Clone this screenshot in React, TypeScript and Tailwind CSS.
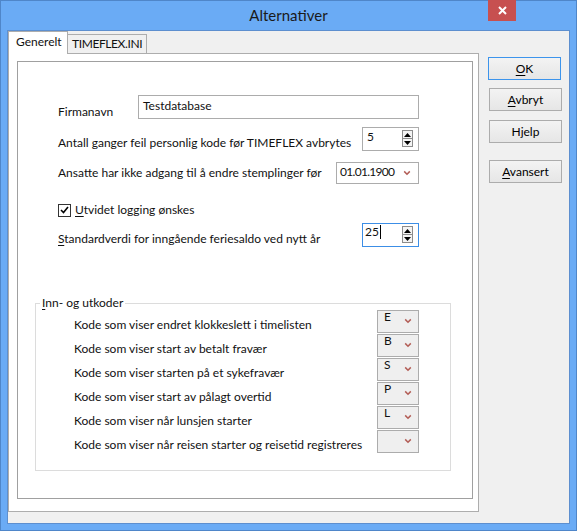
import React from "react";

const FONT = "font-['Lato',sans-serif]";

function Chevron() {
  return (
    <svg width="8" height="6" viewBox="0 0 8 6" className="shrink-0">
      <path d="M1.2 1.4 L4 4.2 L6.8 1.4" fill="none" stroke="#b35e57" strokeWidth="1.5" />
    </svg>
  );
}

function SpinArrows() {
  return (
    <div className="flex flex-col">
      <div className="flex h-[9px] w-[11px] items-center justify-center border border-[#8c8c8c] bg-[#f4f4f4]">
        <svg width="7" height="4" viewBox="0 0 7 4">
          <path d="M0 4 L3.5 0 L7 4Z" fill="#000" />
        </svg>
      </div>
      <div className="-mt-px flex h-[9px] w-[11px] items-center justify-center border border-[#8c8c8c] bg-[#f4f4f4]">
        <svg width="7" height="4" viewBox="0 0 7 4">
          <path d="M0 0 L3.5 4 L7 0Z" fill="#000" />
        </svg>
      </div>
    </div>
  );
}

function Button({ children, focused }: { children: React.ReactNode; focused?: boolean }) {
  return (
    <div
      className={
        "flex h-[23px] w-[73px] items-center justify-center border bg-gradient-to-b from-[#f3f3f3] to-[#e6e6e6] text-[12px] text-black " +
        (focused ? "border-[#3c94ec]" : "border-[#acacac]")
      }
    >
      {children}
    </div>
  );
}

const CODES = [
  { label: "Kode som viser endret klokkeslett i timelisten", value: "E" },
  { label: "Kode som viser start av betalt fravær", value: "B" },
  { label: "Kode som viser starten på et sykefravær", value: "S" },
  { label: "Kode som viser start av pålagt overtid", value: "P" },
  { label: "Kode som viser når lunsjen starter", value: "L" },
  { label: "Kode som viser når reisen starter og reisetid registreres", value: "" },
];

export default function App() {
  return (
    <div
      className={`flex h-[531px] w-[577px] flex-col whitespace-nowrap bg-[#6aabf5] shadow-[inset_0_0_0_1px_#4f86c9] text-[12px] leading-[16px] text-[#111] ${FONT}`}
    >
      {/* title bar */}
      <div className="relative flex h-[30px] shrink-0 items-center justify-center pb-[1px]">
        <span className="text-[15px] leading-[20px] text-[#1a1a1a]">Alternativer</span>
        <div className="absolute right-[61px] top-0 flex h-[21px] w-[28px] items-center justify-center bg-[#c75050]">
          <svg width="9" height="9" viewBox="0 0 9 9">
            <path d="M1 1 L8 8 M8 1 L1 8" stroke="#fff" strokeWidth="2" />
          </svg>
        </div>
      </div>

      {/* client area */}
      <div className="mx-[7px] mb-[7px] flex flex-1 border border-[#5d8fcf] bg-[#f0f0f0]">
        {/* tabs column */}
        <div className="flex w-[471px] flex-col pb-[11px]">
          <div className="flex h-[22px] items-end">
            <div className="relative z-10 -mb-px flex h-[23px] w-[60px] items-start border border-b-0 border-[#adadad] bg-white pl-[7px] pt-[2px]">
              Generelt
            </div>
            <div className="flex h-[19px] w-[79px] items-start border border-l-0 border-b-0 border-[#adadad] bg-[#f0f0f0] pl-[4px] pt-[1px] tracking-[-0.4px]">
              TIMEFLEX.INI
            </div>
          </div>
          <div className="flex flex-1 flex-col border border-[#adadad] bg-white pb-[12px] pl-[8px] pr-[5px] pt-[7px]">
            <div className="flex flex-1 flex-col border border-[#a0a0a0] bg-white">
              {/* Firmanavn */}
              <div className="mt-[33px] flex h-[24px] items-start pl-[40px] pr-[53px]">
                <span className="pt-[9px]">Firmanavn</span>
                <div className="ml-auto flex h-[24px] w-[281px] items-start border border-[#acacac] bg-white pl-[4px] pt-[2px]">
                  Testdatabase
                </div>
              </div>
              {/* Antall */}
              <div className="mt-[8px] flex h-[24px] items-start pl-[40px] pr-[53px]">
                <span className="mt-[8px]">Antall ganger feil personlig kode før TIMEFLEX avbrytes</span>
                <div className="ml-auto flex h-[24px] w-[57px] items-start border border-[#acacac] bg-white pl-[4px] pr-[5px] pt-px">
                  <span>5</span>
                  <div className="ml-auto mt-px">
                    <SpinArrows />
                  </div>
                </div>
              </div>
              {/* Ansatte */}
              <div className="mt-[11px] flex h-[22px] items-start pl-[40px] pr-[53px]">
                <span className="mt-[3px]">Ansatte har ikke adgang til å endre stemplinger før</span>
                <div className="ml-auto flex h-[22px] w-[83px] items-center border border-[#acacac] bg-white pl-[3px] pr-[7px]">
                  <span className="-mt-[2px] tracking-[-0.7px]">01.01.1900</span>
                  <div className="ml-auto -mt-[1px]">
                    <Chevron />
                  </div>
                </div>
              </div>
              {/* checkbox */}
              <div className="mt-[19px] flex h-[14px] items-center pl-[40px]">
                <div className="flex h-[13px] w-[13px] items-center justify-center border border-[#333] bg-white">
                  <svg width="9" height="8" viewBox="0 0 9 8">
                    <path d="M1 4 L3.5 6.5 L8 1" fill="none" stroke="#000" strokeWidth="1.6" />
                  </svg>
                </div>
                <span className="ml-[4px]">
                  <span className="underline underline-offset-2">U</span>tvidet logging ønskes
                </span>
              </div>
              {/* Standardverdi */}
              <div className="mt-[6px] flex h-[24px] items-start pl-[40px] pr-[53px]">
                <span className="mt-[8px]">
                  <span className="underline underline-offset-2">S</span>tandardverdi for inngående feriesaldo ved nytt år
                </span>
                <div className="ml-auto flex h-[24px] w-[57px] items-start border border-[#3c8ee6] bg-white pl-[2px] pr-[5px]">
                  <span className="flex items-center">
                    25<span className="ml-px inline-block h-[14px] w-px bg-black" />
                  </span>
                  <div className="ml-auto mt-[2px]">
                    <SpinArrows />
                  </div>
                </div>
              </div>
              {/* group */}
              <fieldset className="ml-[17px] mt-[48px] h-[176px] w-[416px] border border-[#dcdcdc]">
                <legend className="ml-[4px] px-[2px] leading-[16px]">
                  <span className="underline underline-offset-2">I</span>nn- og utkoder
                </legend>
                <div className="-mt-px flex flex-col">
                  {CODES.map((c) => (
                    <div key={c.label} className="flex h-[24px] items-start pl-[38px] pr-[31px]">
                      <span className="mt-[7px]">{c.label}</span>
                      <div className="ml-auto flex h-[23px] w-[42px] items-start border border-[#acacac] bg-[#efefef] pl-[6px] pr-[6px]">
                        <span className="-mt-[2px]">{c.value}</span>
                        <div className="ml-auto mt-[7px]">
                          <Chevron />
                        </div>
                      </div>
                    </div>
                  ))}
                </div>
              </fieldset>
            </div>
          </div>
        </div>

        {/* buttons */}
        <div className="flex flex-col pl-[9px] pt-[26px]">
          <Button focused>
            <span>
              <span className="underline underline-offset-2">O</span>K
            </span>
          </Button>
          <div className="ml-px mt-[8px]">
            <Button>
              <span>
                <span className="underline underline-offset-2">A</span>vbryt
              </span>
            </Button>
          </div>
          <div className="ml-px mt-[9px]">
            <Button>Hjelp</Button>
          </div>
          <div className="ml-px mt-[17px]">
            <Button>
              <span>
                <span className="underline underline-offset-2">A</span>vansert
              </span>
            </Button>
          </div>
        </div>
      </div>
    </div>
  );
}
